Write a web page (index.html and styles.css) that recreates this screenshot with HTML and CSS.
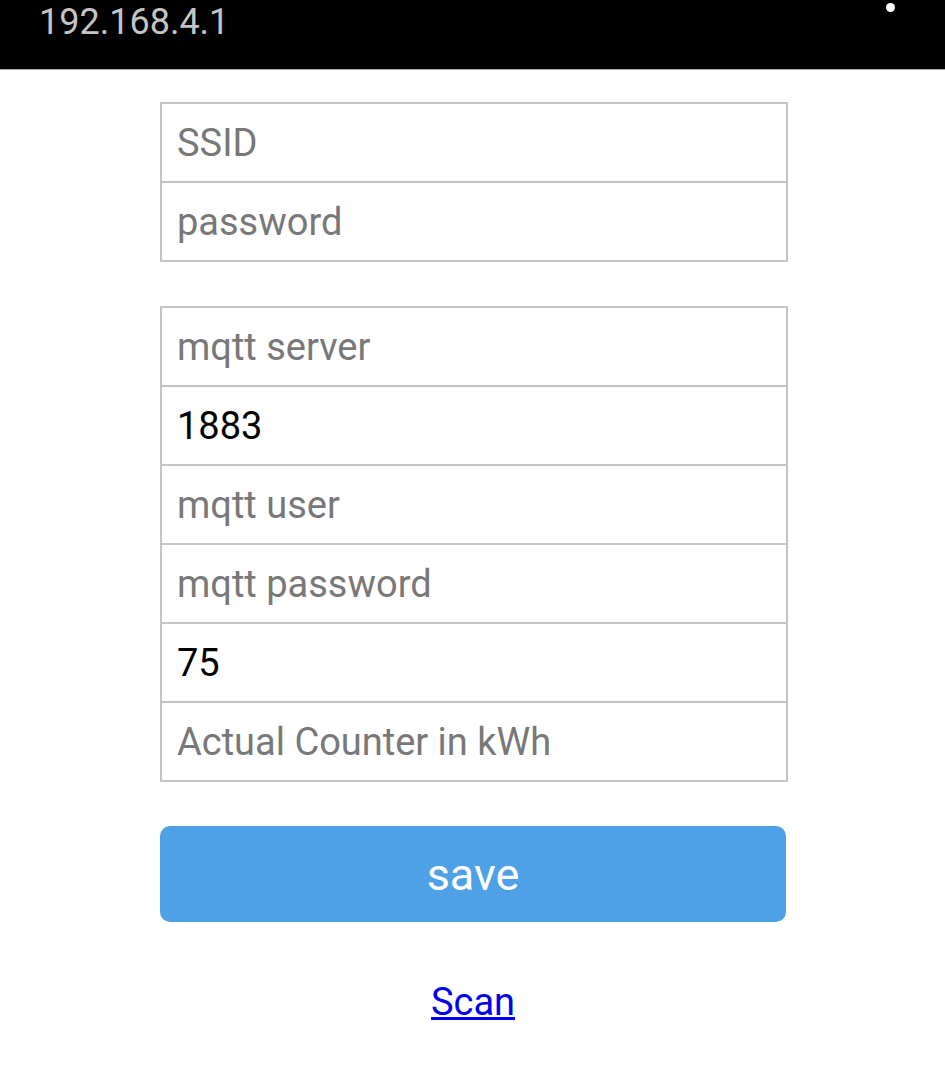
FILE: index.html
```html
<!DOCTYPE html>
<html lang="en">
<head>
<meta charset="utf-8">
<title>192.168.4.1</title>
<link rel="stylesheet" href="styles.css">
</head>
<body>
<header class="topbar">
  <span class="address">192.168.4.1</span>
  <span class="dot"></span>
</header>
<main class="page">
  <form class="form">
    <div class="group">
      <input class="field" type="text" placeholder="SSID">
      <input class="field" type="password" placeholder="password">
    </div>
    <div class="group">
      <input class="field" type="text" placeholder="mqtt server">
      <input class="field" type="text" value="1883">
      <input class="field" type="text" placeholder="mqtt user">
      <input class="field" type="password" placeholder="mqtt password">
      <input class="field" type="text" value="75">
      <input class="field" type="text" placeholder="Actual Counter in kWh">
    </div>
    <button class="save" type="button">save</button>
    <div class="links"><a class="scan" href="#">Scan</a></div>
  </form>
</main>
</body>
</html>
```
FILE: styles.css
```css
html, body {
  margin: 0;
  padding: 0;
  background: #ffffff;
  font-family: Roboto, "Noto Sans", sans-serif;
}

.topbar {
  position: relative;
  height: 69px;
  background: #000000;
  border-bottom: 1px solid #a8a8a8;
  display: flex;
  align-items: flex-start;
  padding-left: 39px;
}

.address {
  color: #c4c4c4;
  font-size: 36px;
  line-height: 44px;
  font-weight: 400;
}

.dot {
  position: absolute;
  left: 886px;
  top: 3px;
  width: 9px;
  height: 9px;
  border-radius: 50%;
  background: #ffffff;
}

.page {
  padding: 32px 0 0 160px;
}

.form {
  width: 628px;
  display: flex;
  flex-direction: column;
}

.group {
  display: flex;
  flex-direction: column;
  margin-bottom: 44px;
}

.field {
  box-sizing: border-box;
  width: 628px;
  height: 81px;
  margin: 0;
  border: 2px solid #c4c4c4;
  padding: 0 0 0 15px;
  font-family: Roboto, "Noto Sans", sans-serif;
  font-size: 38px;
  color: #000000;
  background: #ffffff;
  outline: none;
}

.field + .field {
  margin-top: -2px;
}

.field::placeholder {
  color: #787878;
  opacity: 1;
}

.save {
  width: 626px;
  height: 96px;
  border: none;
  border-radius: 10px;
  background: #4ea1e6;
  color: #ffffff;
  font-family: Roboto, "Noto Sans", sans-serif;
  font-size: 45px;
  padding: 0;
  margin: 0;
}

.links {
  width: 626px;
  text-align: center;
  margin-top: 58px;
}

.scan {
  color: #0000ee;
  font-size: 38px;
  text-decoration: underline;
}
```
